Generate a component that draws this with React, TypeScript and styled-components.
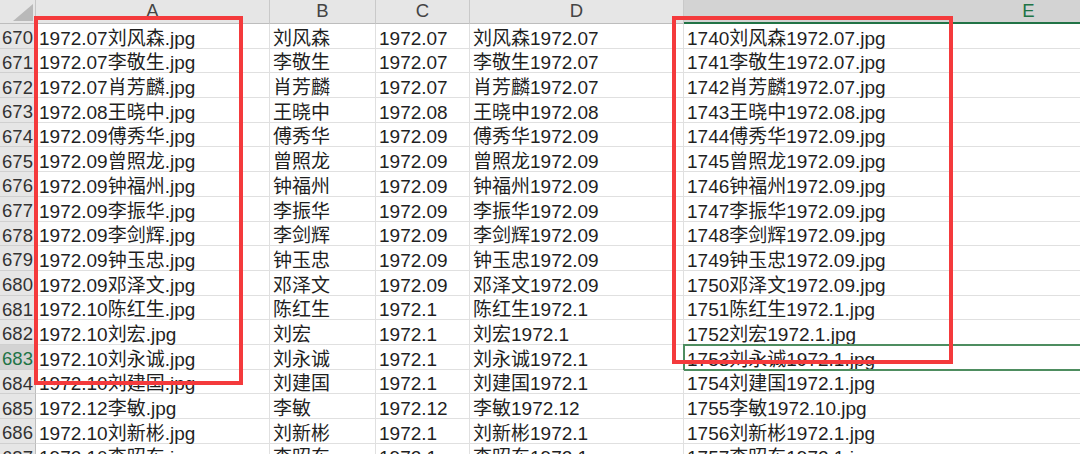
import React from "react";
import styled, { createGlobalStyle } from "styled-components";

const Global = createGlobalStyle`
  html, body { margin: 0; padding: 0; background: #fff; }
  body { width: 1080px; height: 454px; overflow: hidden; }
`;

const ROW_H = 24.7;

const Sheet = styled.div`
  position: relative;
  width: 1080px;
  height: 454px;
  overflow: hidden;
  font-family: "Liberation Sans", "Noto Sans CJK SC", sans-serif;
  font-size: 19px;
  color: #1f1f1f;
`;

const Grid = styled.div`
  display: grid;
  grid-template-columns: 36px 234px 106px 94px 214px 690px;
  grid-template-rows: 24px repeat(18, ${ROW_H}px);
  width: 1374px;
`;

const Corner = styled.div`
  background: #e6e6e6;
  border-right: 1px solid #c6c6c6;
  border-bottom: 1px solid #bdbdbd;
  box-sizing: border-box;
  display: flex;
  align-items: flex-end;
  justify-content: flex-end;
  padding: 0 2px 2px 0;
`;

const ColHead = styled.div<{ $active?: boolean }>`
  box-sizing: border-box;
  background: ${(p) => (p.$active ? "#d3d3d3" : "#e6e6e6")};
  color: ${(p) => (p.$active ? "#217346" : "#444")};
  border-right: 1px solid #c9c9c9;
  border-bottom: ${(p) => (p.$active ? "2px solid #217346" : "1px solid #bdbdbd")};
  display: flex;
  align-items: flex-end;
  justify-content: center;
  font-size: 18.5px;
  line-height: 18.5px;
  padding-bottom: ${(p) => (p.$active ? "2px" : "3px")};
`;

const RowHead = styled.div<{ $active?: boolean }>`
  box-sizing: border-box;
  background: ${(p) => (p.$active ? "#d3d3d3" : "#e6e6e6")};
  color: ${(p) => (p.$active ? "#217346" : "#333")};
  border-right: 1px solid #bdbdbd;
  border-bottom: 1px solid #d0d0d0;
  display: flex;
  align-items: flex-end;
  justify-content: center;
  font-size: 18.5px;
  line-height: 18.5px;
  white-space: nowrap;
`;

const Cell = styled.div<{ $selected?: boolean }>`
  box-sizing: border-box;
  border-right: 1px solid #e0e0e0;
  border-bottom: 1px solid #e0e0e0;
  display: flex;
  align-items: flex-end;
  padding-left: 3px;
  line-height: 19px;
  white-space: nowrap;
  position: relative;
  ${(p) =>
    p.$selected &&
    `
    outline: 2px solid #4e8d60;
    outline-offset: -1px;
  `}
`;

const Mark = styled.div<{ $l: number; $t: number; $w: number; $h: number }>`
  position: absolute;
  left: ${(p) => p.$l}px;
  top: ${(p) => p.$t}px;
  width: ${(p) => p.$w}px;
  height: ${(p) => p.$h}px;
  box-sizing: border-box;
  border: 4px solid #f43a3c;
  pointer-events: none;
`;

type Row = [number, string, string, string, string];

const ppl: [string, string][] = [
  ["刘风森", "1972.07"],
  ["李敬生", "1972.07"],
  ["肖芳麟", "1972.07"],
  ["王晓中", "1972.08"],
  ["傅秀华", "1972.09"],
  ["曾照龙", "1972.09"],
  ["钟福州", "1972.09"],
  ["李振华", "1972.09"],
  ["李剑辉", "1972.09"],
  ["钟玉忠", "1972.09"],
  ["邓泽文", "1972.09"],
];

const rows: Row[] = [
  ...ppl.map(
    ([n, d], i) =>
      [670 + i, `${d}${n}.jpg`, n, d, `${1740 + i}${n}${d}.jpg`] as Row
  ),
  [681, "1972.10陈红生.jpg", "陈红生", "1972.1", "1751陈红生1972.1.jpg"],
  [682, "1972.10刘宏.jpg", "刘宏", "1972.1", "1752刘宏1972.1.jpg"],
  [683, "1972.10刘永诚.jpg", "刘永诚", "1972.1", "1753刘永诚1972.1.jpg"],
  [684, "1972.10刘建国.jpg", "刘建国", "1972.1", "1754刘建国1972.1.jpg"],
  [685, "1972.12李敏.jpg", "李敏", "1972.12", "1755李敏1972.10.jpg"],
  [686, "1972.10刘新彬.jpg", "刘新彬", "1972.1", "1756刘新彬1972.1.jpg"],
  [687, "1972.10李昭东.jpg", "李昭东", "1972.1", "1757李昭东1972.1.jpg"],
];

export default function App() {
  return (
    <>
      <Global />
      <Sheet>
        <Grid>
          <Corner>
            <svg width="20" height="17" viewBox="0 0 20 17">
              <polygon points="20,0 20,17 0,17" fill="#b9b9b9" />
            </svg>
          </Corner>
          <ColHead>A</ColHead>
          <ColHead>B</ColHead>
          <ColHead>C</ColHead>
          <ColHead>D</ColHead>
          <ColHead $active>E</ColHead>
          {rows.map(([n, a, b, c, e]) => {
            const sel = n === 683;
            const d = `${b}${c}`;
            return (
              <React.Fragment key={n}>
                <RowHead $active={sel}>{n}</RowHead>
                <Cell>{a}</Cell>
                <Cell>{b}</Cell>
                <Cell>{c}</Cell>
                <Cell>{d}</Cell>
                <Cell $selected={sel}>{e}</Cell>
              </React.Fragment>
            );
          })}
        </Grid>
        <Mark $l={34} $t={16} $w={209} $h={369} />
        <Mark $l={672} $t={16} $w={281} $h={348} />
      </Sheet>
    </>
  );
}
